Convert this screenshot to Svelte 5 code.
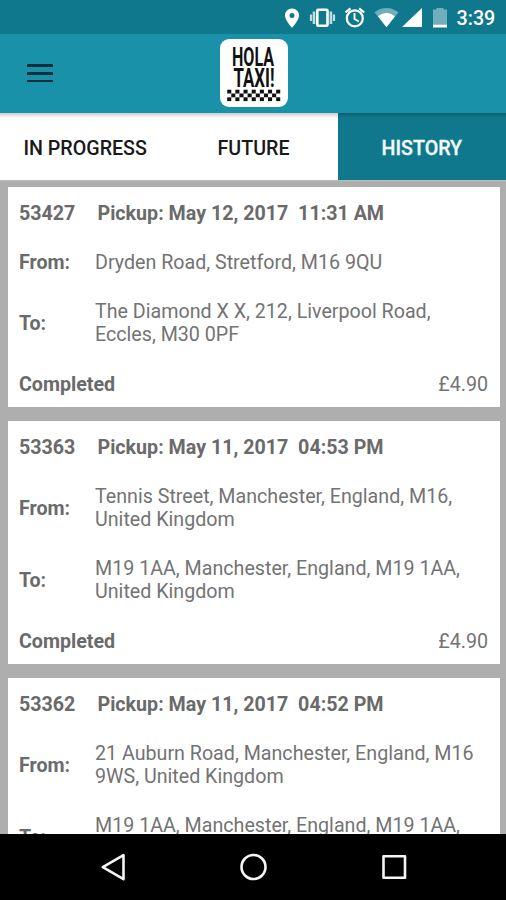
<script>
  const rides = [
    { id: '53427', date: 'May 12, 2017', time: '11:31 AM', from: ['Dryden Road, Stretford, M16 9QU'], to: ['The Diamond X X, 212, Liverpool Road,', 'Eccles, M30 0PF'], price: '£4.90' },
    { id: '53363', date: 'May 11, 2017', time: '04:53 PM', from: ['Tennis Street, Manchester, England, M16,', 'United Kingdom'], to: ['M19 1AA, Manchester, England, M19 1AA,', 'United Kingdom'], price: '£4.90' },
    { id: '53362', date: 'May 11, 2017', time: '04:52 PM', from: ['21 Auburn Road, Manchester, England, M16', '9WS, United Kingdom'], to: ['M19 1AA, Manchester, England, M19 1AA,', 'United Kingdom'], price: '£4.90' }
  ];
  const tabs = ['IN PROGRESS', 'FUTURE', 'HISTORY'];
  let active = $state(2);
  const checks = [];
  for (let r = 0; r < 3; r++) for (let c = 0; c < 13; c++) if ((r + c) % 2 === 0) checks.push([c, r]);
</script>

<div class="screen">
  <div class="status">
    <svg width="186" height="34" viewBox="280 0 186 34" fill="#fff">
      <path fill-rule="evenodd" d="M292 8.500c-4 0-7 3-7 7 0 5 7 12.300 7 12.300s7-7.300 7-12.300c0-4-3-7-7-7zm0 4.600a2.500 2.500 0 1 1 0 5 2.500 2.500 0 0 1 0-5z"/>
      <g fill="none" stroke="#fff">
        <rect x="317.300" y="9.700" width="10.200" height="16" rx="1" stroke-width="2.600"/>
        <path d="M314 11.500v12.500M330.900 11.500v12.500" stroke-width="2.600" opacity=".75"/>
        <path d="M311 14.500v6.500M334 14.500v6.500" stroke-width="2.200" opacity=".75"/>
        <circle cx="354.800" cy="18.300" r="8" stroke-width="2.200"/>
        <path d="M354.500 13v6l4.300 2.500" stroke-width="1.900"/>
        <path d="M345.500 12.500l5-4.200M364.200 12.500l-5-4.200" stroke-width="2.200"/>
      </g>
      <path d="M374.500 12.300Q386.500 3.500 398.500 12.300L386.500 27.300z" opacity=".4"/>
      <path d="M378 16.300Q386.500 9.300 395 16.300L386.500 27.300z"/>
      <path d="M422 8v19h-20z"/>
      <path d="M433 9.500h3.500V8h7v1.500h3.500V25h-14z" opacity=".4"/>
      <path d="M433 24.700h14v2.800h-14z"/>
    </svg>
    <span class="clock">3:39</span>
  </div>

  <header>
    <button class="menu" aria-label="Menu"><i></i><i></i><i></i></button>
    <svg class="logo" width="68" height="68" viewBox="0 0 68 68">
      <rect width="68" height="68" rx="9" fill="#fff"/>
      <g class="logotext" fill="#111">
        <text x="12" y="27" textLength="42" lengthAdjust="spacingAndGlyphs">HOLA</text>
        <text x="13.500" y="47.700" textLength="41" lengthAdjust="spacingAndGlyphs">TAXI!</text>
      </g>
      {#each checks as [c, r]}
        <rect x={7.2 + c * 4.08} y={50.7 + r * 3.8} width="4.08" height="3.8" fill="#111"/>
      {/each}
    </svg>
  </header>

  <nav>
    {#each tabs as tab, i}
      <button class:active={active === i} onclick={() => (active = i)}><span>{tab}</span></button>
    {/each}
  </nav>

  <main>
    {#each rides as ride}
      <article>
        <div class="row head"><b class="id">{ride.id}</b><b class="pickup">Pickup: {ride.date}&nbsp; {ride.time}</b></div>
        <div class="row"><b class="label">From:</b><p>{#each ride.from as line}<span>{line}</span>{/each}</p></div>
        <div class="row"><b class="label">To:</b><p>{#each ride.to as line}<span>{line}</span>{/each}</p></div>
        <div class="row foot"><b>Completed</b><span class="price">{ride.price}</span></div>
      </article>
    {/each}
  </main>

  <footer>
    <svg width="506" height="66" viewBox="0 0 506 66" fill="none" stroke="#f4f4f4" stroke-width="2.600" stroke-linejoin="round">
      <path d="M102.800 33.200l20.700-12v24z"/>
      <circle cx="253.500" cy="33" r="12"/>
      <rect x="383.500" y="22.300" width="21.500" height="21.500"/>
    </svg>
  </footer>
</div>

<style>
  .screen { width: 506px; height: 900px; display: flex; flex-direction: column; overflow: hidden; font-family: Roboto, sans-serif; font-size: 19.66px; background: #aeaeae; }
  .status { height: 34px; flex: none; display: flex; padding-left: 280px; background: #0f788c; }
  .status svg { display: block; flex: none; margin-right: -9.5px; }
  .clock { color: #fff; font-size: 19.7px; font-weight: 500; line-height: 37px; }
  header { height: 79px; flex: none; display: flex; align-items: flex-start; background: #1991a9; }
  button { border: 0; padding: 0; background: none; font: inherit; }
  .menu { width: 26px; margin: 30px 167px 0 27px; display: flex; flex-direction: column; gap: 5px; }
  .menu i { height: 3px; background: #082f40; }
  .menu i:nth-child(n+2) { height: 2.500px; }
  .logo { display: block; margin-top: 5px; overflow: visible; }
  .logotext { font-family: Roboto, sans-serif; font-weight: 700; font-size: 26px; }
  nav { height: 67px; flex: none; display: flex; padding-left: 1px; background: #fff; box-shadow: 0 1px 1px #bbb; position: relative; }
  nav::before { content: ''; position: absolute; inset: 0 0 auto; height: 5px; background: linear-gradient(#0003, #0000); }
  nav button { flex: 1 1 0; height: 67px; color: #191919; font-weight: 500; padding-top: 3px; }
  nav button.active { background: #0f788c; color: #f4fbfc; -webkit-text-stroke: 0.3px #f4fbfc; }
  main { flex: 1; overflow: hidden; padding: 7px 6px 0 7.500px; }
  article { background: #fff; margin-bottom: 13.800px; color: #737373; }
  .row { display: flex; align-items: center; padding: 14.900px 12px 11.400px 11.500px; line-height: 23px; }
  b { font-weight: 700; color: #6a6a6a; }
  .id { width: 78.500px; }
  .label { width: 76px; }
  p { margin: 0; }
  p span { display: block; white-space: nowrap; }
  .foot { justify-content: space-between; }
  footer { height: 66.500px; flex: none; background: #000; }
  footer svg { display: block; }
</style>
